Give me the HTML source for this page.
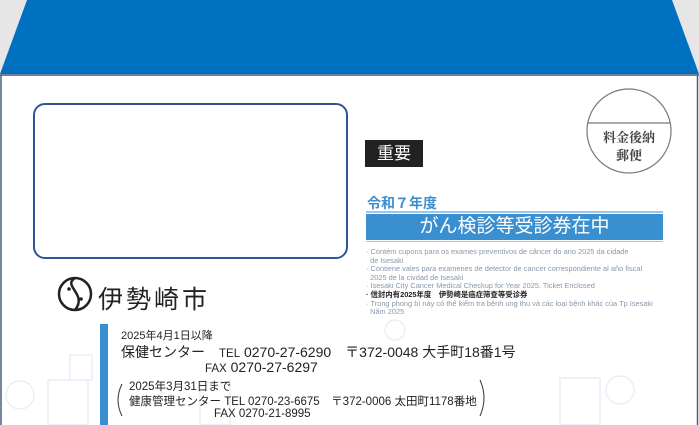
<!DOCTYPE html>
<html><head><meta charset="utf-8"><style>
body{margin:0;width:699px;height:425px;overflow:hidden;background:#fff;position:relative;font-family:"Liberation Sans","Noto Sans CJK JP",sans-serif}
.a{position:absolute;white-space:nowrap}
</style></head><body>
<svg class="a" style="left:0;top:0" width="699" height="425">
<rect width="699" height="76" fill="#e6e6e6"/>
<polygon points="27,0 672,0 699,74 0,74" fill="#0070c0"/>
<line x1="0" y1="75" x2="699" y2="75" stroke="#4a5d80" stroke-width="1.5"/>
<line x1="1" y1="75" x2="1" y2="425" stroke="#4a5d80" stroke-width="1.5"/>
<line x1="697.5" y1="75" x2="697.5" y2="425" stroke="#4a5d80" stroke-width="1.5"/>
<rect x="34" y="104" width="313" height="154" rx="11" fill="none" stroke="#2f5597" stroke-width="2"/>
<circle cx="629" cy="131" r="42" fill="none" stroke="#777" stroke-width="1.2"/>
<line x1="588" y1="123" x2="670" y2="123" stroke="#777" stroke-width="1.3"/>
<g fill="none" stroke="#e8eff7" stroke-width="1.5">
<rect x="48" y="380" width="40" height="45"/><rect x="70" y="355" width="22" height="25"/>
<rect x="200" y="382" width="30" height="43"/><rect x="560" y="378" width="40" height="47"/>
<circle cx="20" cy="395" r="14"/><circle cx="395" cy="330" r="10"/><circle cx="620" cy="390" r="14"/>
</g>
<rect x="100" y="324" width="8" height="101" fill="#3a8fd0"/>
<circle cx="75" cy="294" r="16" fill="none" stroke="#222" stroke-width="2.5"/>
<path d="M75 278 C62 286,88 294,75 310" fill="none" stroke="#222" stroke-width="2.5"/>
<circle cx="69" cy="289" r="1.8" fill="#222"/><circle cx="81" cy="299" r="1.8" fill="#222"/>
<path d="M122 384 Q114 400 122 416" fill="none" stroke="#333" stroke-width="1"/>
<path d="M480 380 Q488 398 480 416" fill="none" stroke="#333" stroke-width="1"/>
</svg>
<div class="a" style="left:598px;top:128px;font-family:'Noto Serif CJK SC',serif;font-size:13px;font-weight:bold;color:#444;width:62px;text-align:center;line-height:18px">料金後納<br>郵便</div>
<div class="a" style="left:365px;top:140px;width:58px;height:27px;background:#222;color:#fff;font-size:17px;line-height:27px;text-align:center">重要</div>
<div class="a" style="left:367px;top:193px;color:#3a8fd0;font-size:14px;font-weight:bold">令和７年度</div>
<div class="a" style="left:366px;top:211px;width:297px;height:2px;background:#9cc6ea"></div>
<div class="a" style="left:366px;top:214px;width:297px;height:26px;background:#3a8fd0;color:#fff;font-size:19px;line-height:26px;text-align:center">がん検診等受診券在中</div>
<div class="a" style="left:366px;top:241px;width:297px;height:1px;background:#9cc6ea"></div>
<div class="a" style="left:366px;top:248px;font-size:7.4px;line-height:8.6px;color:#8898ac">
· Contém cupons para os exames preventivos de câncer do ano 2025 da cidade<br>&nbsp;&nbsp;de Isesaki<br>
· Contiene vales para examenes de detector de cancer correspondiente al año fiscal<br>&nbsp;&nbsp;2025 de la civdad de Isesaki<br>
· Isesaki City Cancer Medical Checkup for  Year 2025. Ticket Enclosed<br>
<span style="color:#222;font-weight:bold">· 信封内有2025年度　伊勢崎是癌症筛查等受诊券</span><br>
· Trong phong bì này có thể kiểm tra bệnh ung thu và các loại bệnh khác của Tp Isesaki<br>&nbsp;&nbsp;Năm 2025</div>
<div class="a" style="left:98px;top:280px;font-size:25px;color:#222;letter-spacing:3px">伊勢崎市</div>
<div class="a" style="left:121px;top:327px;font-size:11px;color:#222">2025年4月1日以降</div>
<div class="a" style="left:121px;top:342px;font-size:14px;color:#222">保健センター　<span style="font-size:11.5px">TEL</span> 0270-27-6290　〒372-0048 大手町18番1号</div>
<div class="a" style="left:205px;top:359px;font-size:14px;color:#222"><span style="font-size:11.5px">FAX</span> 0270-27-6297</div>
<div class="a" style="left:129px;top:378px;font-size:11.5px;color:#222">2025年3月31日まで</div>
<div class="a" style="left:129px;top:393px;font-size:11.5px;color:#222">健康管理センター TEL 0270-23-6675　〒372-0006 太田町1178番地</div>
<div class="a" style="left:214px;top:408px;font-size:11.5px;color:#222">FAX 0270-21-8995</div>
</body></html>
